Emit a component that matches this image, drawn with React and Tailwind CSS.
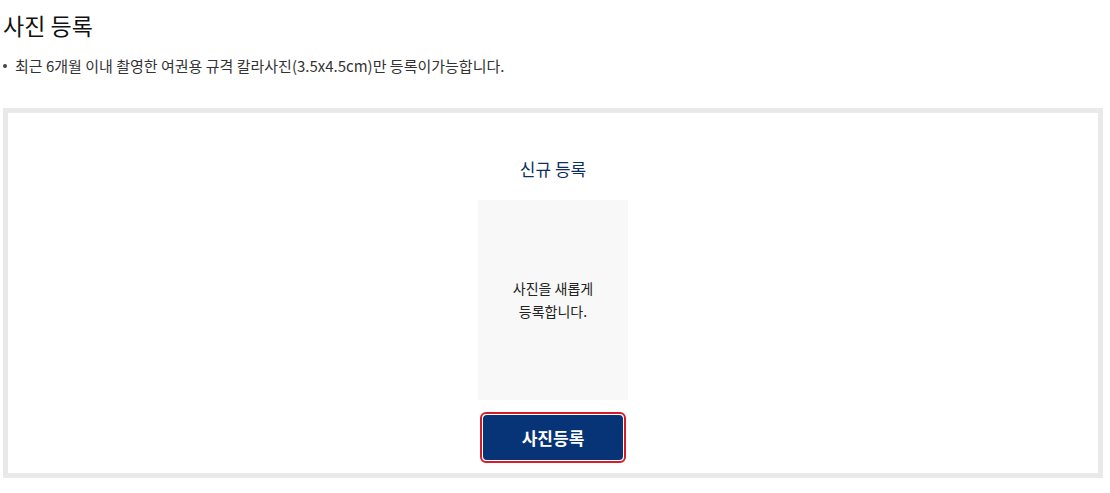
export default function App() {
  return (
    <div className="w-[1110px] h-[493px] bg-white text-[#222]" style={{ fontFamily: '"Noto Sans CJK KR", "Noto Sans", sans-serif' }}>
      <div className="pl-[3px] pr-[7px]">
        <h2 className="pt-[10px] text-[23px] leading-[30px] font-normal text-[#111]">사진 등록</h2>
        <ul className="mt-[15px]">
          <li className="flex items-center text-[15px] leading-[22px] text-[#333]">
            <span className="w-[12px] flex justify-start pl-[0px]">
              <span className="block w-[4px] h-[4px] rounded-full bg-[#444] ml-[0px]"></span>
            </span>
            <span>최근 6개월 이내 촬영한 여권용 규격 칼라사진(3.5x4.5cm)만 등록이가능합니다.</span>
          </li>
        </ul>
        <div className="mt-[31px] h-[370px] border-[5px] border-[#e9e9e9] flex flex-col items-center pt-[44px]">
          <h3 className="text-[17px] leading-[24px] text-[#0b2f5e] font-normal">신규 등록</h3>
          <div className="mt-[19px] w-[150px] h-[200px] bg-[#f8f8f8] flex items-center justify-center text-center text-[14px] leading-[23px] text-[#222]">
            사진을 새롭게<br />등록합니다.
          </div>
          <button className="mt-[12px] w-[146px] h-[51px] rounded-[6px] border-2 border-[#d51d27] p-[1px] bg-white">
            <span className="flex h-full w-full items-center justify-center rounded-[4px] bg-[#073476] text-white text-[17px] font-bold">사진등록</span>
          </button>
        </div>
      </div>
    </div>
  );
}
